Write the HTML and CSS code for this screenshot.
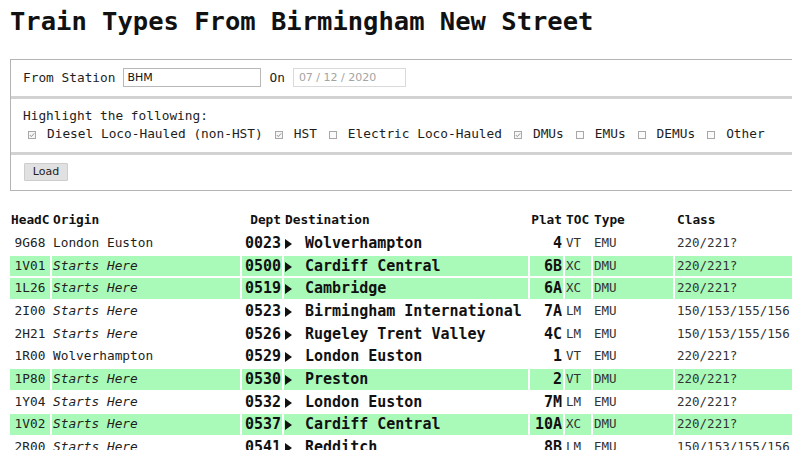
FILE: index.html
```html
<!DOCTYPE html>
<html lang="en">
<head>
<meta charset="utf-8">
<title>Train Types From Birmingham New Street</title>
<link rel="stylesheet" href="styles.css">
</head>
<body>
<h1 class="title">Train Types From Birmingham New Street</h1>

<div class="panel">
  <div class="prow prow-station">
    <span class="lbl">From Station</span>
    <span class="field field-text">BHM</span>
    <span class="lbl">On</span>
    <span class="field field-date">07 / 12 / 2020</span>
  </div>
  <div class="prow prow-filter">
    <div class="lbl">Highlight the following:</div>
    <div class="checks">
      <span class="chk"><svg class="box" width="8" height="8" viewBox="0 0 8 8"><rect x="0.5" y="0.5" width="7" height="7" fill="#f6f6f6" stroke="#a8a8a8"/><polyline points="1.8,4 3.3,5.6 6.2,2.4" fill="none" stroke="#8a8a8a" stroke-width="0.9"/></svg>Diesel Loco-Hauled (non-HST)</span>
      <span class="chk"><svg class="box" width="8" height="8" viewBox="0 0 8 8"><rect x="0.5" y="0.5" width="7" height="7" fill="#f6f6f6" stroke="#a8a8a8"/><polyline points="1.8,4 3.3,5.6 6.2,2.4" fill="none" stroke="#8a8a8a" stroke-width="0.9"/></svg>HST</span>
      <span class="chk"><svg class="box" width="8" height="8" viewBox="0 0 8 8"><rect x="0.5" y="0.5" width="7" height="7" fill="#fbfbfb" stroke="#a8a8a8"/></svg>Electric Loco-Hauled</span>
      <span class="chk"><svg class="box" width="8" height="8" viewBox="0 0 8 8"><rect x="0.5" y="0.5" width="7" height="7" fill="#f6f6f6" stroke="#a8a8a8"/><polyline points="1.8,4 3.3,5.6 6.2,2.4" fill="none" stroke="#8a8a8a" stroke-width="0.9"/></svg>DMUs</span>
      <span class="chk"><svg class="box" width="8" height="8" viewBox="0 0 8 8"><rect x="0.5" y="0.5" width="7" height="7" fill="#fbfbfb" stroke="#a8a8a8"/></svg>EMUs</span>
      <span class="chk"><svg class="box" width="8" height="8" viewBox="0 0 8 8"><rect x="0.5" y="0.5" width="7" height="7" fill="#fbfbfb" stroke="#a8a8a8"/></svg>DEMUs</span>
      <span class="chk"><svg class="box" width="8" height="8" viewBox="0 0 8 8"><rect x="0.5" y="0.5" width="7" height="7" fill="#fbfbfb" stroke="#a8a8a8"/></svg>Other</span>
    </div>
  </div>
  <div class="prow prow-action">
    <span class="btn">Load</span>
  </div>
</div>

<table class="trains">
  <colgroup>
    <col class="c-head"><col class="c-origin"><col class="c-dept"><col class="c-dest"><col class="c-plat"><col class="c-toc"><col class="c-type"><col class="c-class">
  </colgroup>
  <thead>
    <tr><th>HeadC</th><th>Origin</th><th class="r">Dept</th><th>Destination</th><th class="r">Plat</th><th>TOC</th><th>Type</th><th class="cls">Class</th></tr>
  </thead>
  <tbody>
    <tr><td class="hc">9G68</td><td class="org">London Euston</td><td class="big r">0023</td><td class="big dest"><svg class="arr" width="7" height="10" viewBox="0 0 7 10"><polygon points="0,0 7,5 0,10" fill="#111"/></svg>Wolverhampton</td><td class="big r">4</td><td class="sm">VT</td><td class="sm">EMU</td><td class="sm cls">220/221?</td></tr>
    <tr class="hl"><td class="hc">1V01</td><td class="org here">Starts Here</td><td class="big r">0500</td><td class="big dest"><svg class="arr" width="7" height="10" viewBox="0 0 7 10"><polygon points="0,0 7,5 0,10" fill="#111"/></svg>Cardiff Central</td><td class="big r">6B</td><td class="sm">XC</td><td class="sm">DMU</td><td class="sm cls">220/221?</td></tr>
    <tr class="hl"><td class="hc">1L26</td><td class="org here">Starts Here</td><td class="big r">0519</td><td class="big dest"><svg class="arr" width="7" height="10" viewBox="0 0 7 10"><polygon points="0,0 7,5 0,10" fill="#111"/></svg>Cambridge</td><td class="big r">6A</td><td class="sm">XC</td><td class="sm">DMU</td><td class="sm cls">220/221?</td></tr>
    <tr><td class="hc">2I00</td><td class="org here">Starts Here</td><td class="big r">0523</td><td class="big dest"><svg class="arr" width="7" height="10" viewBox="0 0 7 10"><polygon points="0,0 7,5 0,10" fill="#111"/></svg>Birmingham International</td><td class="big r">7A</td><td class="sm">LM</td><td class="sm">EMU</td><td class="sm cls">150/153/155/156</td></tr>
    <tr><td class="hc">2H21</td><td class="org here">Starts Here</td><td class="big r">0526</td><td class="big dest"><svg class="arr" width="7" height="10" viewBox="0 0 7 10"><polygon points="0,0 7,5 0,10" fill="#111"/></svg>Rugeley Trent Valley</td><td class="big r">4C</td><td class="sm">LM</td><td class="sm">EMU</td><td class="sm cls">150/153/155/156</td></tr>
    <tr><td class="hc">1R00</td><td class="org">Wolverhampton</td><td class="big r">0529</td><td class="big dest"><svg class="arr" width="7" height="10" viewBox="0 0 7 10"><polygon points="0,0 7,5 0,10" fill="#111"/></svg>London Euston</td><td class="big r">1</td><td class="sm">VT</td><td class="sm">EMU</td><td class="sm cls">220/221?</td></tr>
    <tr class="hl"><td class="hc">1P80</td><td class="org here">Starts Here</td><td class="big r">0530</td><td class="big dest"><svg class="arr" width="7" height="10" viewBox="0 0 7 10"><polygon points="0,0 7,5 0,10" fill="#111"/></svg>Preston</td><td class="big r">2</td><td class="sm">VT</td><td class="sm">DMU</td><td class="sm cls">220/221?</td></tr>
    <tr><td class="hc">1Y04</td><td class="org here">Starts Here</td><td class="big r">0532</td><td class="big dest"><svg class="arr" width="7" height="10" viewBox="0 0 7 10"><polygon points="0,0 7,5 0,10" fill="#111"/></svg>London Euston</td><td class="big r">7M</td><td class="sm">LM</td><td class="sm">EMU</td><td class="sm cls">220/221?</td></tr>
    <tr class="hl"><td class="hc">1V02</td><td class="org here">Starts Here</td><td class="big r">0537</td><td class="big dest"><svg class="arr" width="7" height="10" viewBox="0 0 7 10"><polygon points="0,0 7,5 0,10" fill="#111"/></svg>Cardiff Central</td><td class="big r">10A</td><td class="sm">XC</td><td class="sm">DMU</td><td class="sm cls">220/221?</td></tr>
    <tr><td class="hc">2R00</td><td class="org here">Starts Here</td><td class="big r">0541</td><td class="big dest"><svg class="arr" width="7" height="10" viewBox="0 0 7 10"><polygon points="0,0 7,5 0,10" fill="#111"/></svg>Redditch</td><td class="big r">8B</td><td class="sm">LM</td><td class="sm">EMU</td><td class="sm cls">150/153/155/156</td></tr>
  </tbody>
</table>
</body>
</html>
```

FILE: styles.css
```css
html {
  overflow: hidden;
  background: #fff;
}

body {
  margin: 0 8px;
  font-family: "DejaVu Sans Mono", "Liberation Mono", monospace;
  color: #1a1a1a;
  font-size: 12.8px;
}

.title {
  margin: 6px 0 0 2px;
  font-size: 25.5px;
  line-height: 30px;
  font-weight: bold;
  color: #111;
  white-space: nowrap;
}

.panel {
  margin: 23px 0 0 2px;
  width: 840px;
  border: 1px solid #b4b4b4;
}

.prow {
  padding: 0 12px;
  box-sizing: border-box;
}

.prow + .prow {
  border-top: 3px solid #d2d2d2;
}

.prow-station {
  height: 36px;
  padding-bottom: 2px;
  display: flex;
  align-items: center;
  gap: 8px;
}

.prow-station .lbl {
  margin-top: 1px;
}

.lbl {
  color: #1e1e1e;
  line-height: 18px;
  white-space: nowrap;
}

.field {
  box-sizing: border-box;
  height: 19px;
  font-family: "DejaVu Sans", "Liberation Sans", sans-serif;
  font-size: 11px;
  line-height: 17px;
  padding: 0 3px;
  border: 1px solid #b8b8b8;
  background: #fff;
  color: #111;
}

.field-text {
  width: 138px;
}

.field-date {
  width: 113px;
  height: 19px;
  margin-top: 1px;
  border-color: #dadada;
  color: #a4a4a4;
  padding-left: 5px;
}

.prow-filter {
  height: 56px;
  padding-top: 8px;
}

.checks {
  display: flex;
  gap: 12px;
  padding-left: 5px;
  line-height: 18px;
  white-space: nowrap;
}

.chk {
  display: flex;
  align-items: center;
  color: #1e1e1e;
}

.box {
  display: block;
  margin: 1px 11px 0 0;
  flex: none;
}

.prow-action {
  height: 38px;
  padding-top: 8px;
}

.btn {
  display: inline-block;
  box-sizing: border-box;
  height: 18px;
  width: 44px;
  margin-left: 1px;
  text-align: center;
  font-family: "DejaVu Sans", "Liberation Sans", sans-serif;
  font-size: 11px;
  line-height: 16px;
  color: #222;
  background: #e1e1e1;
  border: 1px solid #cdcdcd;
  border-radius: 1px;
}

.trains {
  margin-top: 18px;
  border-collapse: separate;
  border-spacing: 2px;
  table-layout: fixed;
  width: 840px;
}

.c-head { width: 40px; }
.c-origin { width: 188px; }
.c-dept { width: 40px; }
.c-dest { width: 244px; }
.c-plat { width: 33px; }
.c-toc { width: 26px; }
.c-type { width: 80px; }
.c-class { width: 181px; }

.trains th {
  font-size: 12.8px;
  font-weight: bold;
  text-align: left;
  height: 20px;
  padding: 0 1px;
  line-height: 17px;
  vertical-align: top;
  white-space: nowrap;
  color: #111;
}

.trains td {
  height: 20.67px;
  padding: 0 1px;
  line-height: 20.67px;
  vertical-align: middle;
  white-space: nowrap;
  overflow: hidden;
}

.trains .r {
  text-align: right;
}

.trains th.cls,
.trains td.cls {
  padding-left: 2px;
}

.trains .hc {
  text-align: center;
  color: #222;
  font-size: 12.8px;
}

.trains .org {
  color: #1e1e1e;
  font-size: 12.8px;
}

.trains .here {
  font-style: italic;
}

.trains .big {
  font-size: 15px;
  font-weight: bold;
  color: #111;
}

.trains .sm {
  font-size: 12.5px;
  color: #333;
}

.trains .dest {
  overflow: visible;
}

.arr {
  display: inline-block;
  vertical-align: -1px;
  margin-right: 13px;
}

.trains tr.hl td {
  background: #a9fab9;
}
```
